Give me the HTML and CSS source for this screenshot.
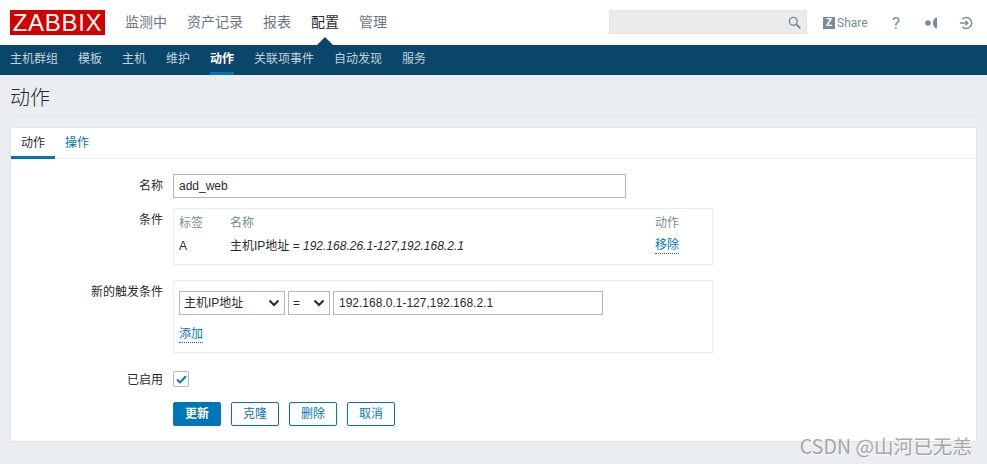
FILE: index.html
```html
<!DOCTYPE html>
<html lang="zh">
<head>
<meta charset="utf-8">
<title>动作</title>
<link rel="stylesheet" href="styles.css">
</head>
<body>
<header class="top">
  <div class="logo">ZABBIX</div>
  <nav class="main-nav">
    <a>监测中</a><a>资产记录</a><a>报表</a><a class="active">配置</a><a>管理</a>
  </nav>
  <div class="tools">
    <div class="search">
      <svg width="13" height="13" viewBox="0 0 16 16" fill="none" stroke="#768d99" stroke-width="1.8"><circle cx="6.5" cy="6.5" r="4.8"/><path d="M10 10L15 15" stroke-width="2.4"/></svg>
    </div>
    <div class="share"><span class="zbadge">Z</span><span>Share</span></div>
    <span class="help">?</span>
    <svg class="ico-support" width="14" height="14" viewBox="0 0 14 14" fill="#768d99"><circle cx="4" cy="7" r="2.8"/><path d="M13 1.5h-1C10 2.5 9 4.5 9 7s1 4.5 3 5.5h1z"/></svg>
    <svg class="ico-exit" width="14" height="14" viewBox="0 0 16 16" fill="none" stroke="#768d99" stroke-width="1.7"><path d="M4 3.6A6.2 6.2 0 1 1 4 12.4"/><path d="M1 8h9"/><path d="M7.5 5.6L10 8l-2.5 2.4"/></svg>
  </div>
</header>
<nav class="sub-nav">
  <a>主机群组</a><a>模板</a><a>主机</a><a>维护</a><a class="active">动作</a><a>关联项事件</a><a>自动发现</a><a>服务</a>
</nav>
<main class="page">
  <h1 class="title">动作</h1>
  <section class="card">
    <div class="tabs"><a class="tab active">动作</a><a class="tab">操作</a></div>
    <form class="form">
      <div class="row row-name">
        <label class="lbl">名称</label>
        <input class="txt txt-name" type="text" value="add_web">
      </div>
      <div class="row row-cond">
        <label class="lbl">条件</label>
        <div class="box box-cond">
          <div class="cond-grid">
            <span class="th">标签</span><span class="th">名称</span><span class="th">动作</span>
            <span>A</span><span>主机IP地址 = <i>192.168.26.1-127,192.168.2.1</i></span><a class="link">移除</a>
          </div>
        </div>
      </div>
      <div class="row row-new">
        <label class="lbl">新的触发条件</label>
        <div class="box box-new">
          <div class="controls">
            <div class="sel sel-type">主机IP地址<svg width="12" height="8" viewBox="0 0 12 8" fill="none" stroke="#1f2c33" stroke-width="2"><path d="M1.5 1.5L6 6l4.5-4.5"/></svg></div>
            <div class="sel sel-op">=<svg width="12" height="8" viewBox="0 0 12 8" fill="none" stroke="#1f2c33" stroke-width="2"><path d="M1.5 1.5L6 6l4.5-4.5"/></svg></div>
            <input class="txt txt-val" type="text" value="192.168.0.1-127,192.168.2.1">
          </div>
          <a class="link link-add">添加</a>
        </div>
      </div>
      <div class="row row-check">
        <label class="lbl">已启用</label>
        <span class="check"><svg width="11" height="9" viewBox="0 0 11 9" fill="none" stroke="#0275b8" stroke-width="2"><path d="M1 4.5L4 7.4 10 1.2"/></svg></span>
      </div>
      <div class="row row-btns">
        <span class="lbl"></span>
        <div class="btns">
          <span class="btn primary">更新</span><span class="btn">克隆</span><span class="btn">删除</span><span class="btn">取消</span>
        </div>
      </div>
    </form>
  </section>
</main>
<div class="watermark">CSDN @山河已无恙</div>
</body>
</html>
```
FILE: styles.css
```css
* { box-sizing: border-box; }
html, body { margin: 0; height: 100%; }
body {
  background: #ebeef0;
  color: #1f2c33;
  font: 12px/16px "Liberation Sans", "Noto Sans CJK SC", sans-serif;
  overflow: hidden;
  position: relative;
}
.top {
  height: 45px;
  background: #fff;
  display: flex;
  align-items: center;
  padding-left: 10px;
}
.logo {
  width: 95px;
  height: 25px;
  background: #d40000;
  color: #fff;
  font: 24px/26px "Liberation Sans", sans-serif;
  text-align: center;
  letter-spacing: 0.7px;
}
.main-nav { display: flex; gap: 20px; margin-left: 20px; font-size: 14px; color: #687780; }
.main-nav a { position: relative; line-height: 45px; }
.main-nav a.active { color: #1f2c33; }
.main-nav a.active::after {
  content: "";
  position: absolute;
  left: 50%;
  bottom: 0;
  margin-left: -8px;
  border: 8px solid transparent;
  border-top: 0;
  border-bottom-color: #0a466a;
}
.tools { margin-left: auto; display: flex; align-items: center; color: #768d99; }
.search {
  width: 198px;
  height: 24px;
  background: #ebebeb;
  border: 1px solid #e3e3e3;
  margin-right: 16px;
  margin-top: -1px;
  display: flex;
  align-items: center;
  justify-content: flex-end;
  padding-right: 5px;
}
.share { display: flex; align-items: center; gap: 2px; width: 46px; font-family: Roboto, sans-serif; }
.zbadge {
  width: 12px;
  height: 12px;
  background: #768d99;
  color: #fff;
  font: 700 10px/12px "Liberation Sans", sans-serif;
  text-align: center;
}
.help { font: 17px/16px Roboto, sans-serif; margin-left: 23px; width: 8px; }
.ico-support { margin-left: 24px; }
.ico-exit { margin-left: 21px; margin-right: 14px; }
.sub-nav {
  height: 30px;
  background: #0a466a;
  display: flex;
  gap: 20px;
  padding-left: 10px;
  color: #c3d2da;
}
.sub-nav a { line-height: 29px; height: 30px; }
.sub-nav a.active { color: #fff; font-weight: 700; border-bottom: 3px solid #0275b8; }
.page { padding: 0 10px; }
.title {
  margin: 0;
  height: 42px;
  border-bottom: 1px solid #dfe4e7;
  font-size: 20px;
  font-weight: 300;
  line-height: 46px;
  color: #1f2c33;
}
.card {
  margin-top: 10px;
  height: 315px;
  width: 967px;
  background: #fff;
  border: 1px solid #dfe4e7;
  border-top-color: #e4e8ea;
}
.tabs { height: 31px; border-bottom: 1px solid #ebeef0; display: flex; }
.tab { width: 44px; text-align: center; line-height: 30px; color: #0275b8; }
.tab.active { color: #1f2c33; border-bottom: 3px solid #0275b8; height: 31px; }
.form { padding-top: 15px; }
.row { display: flex; align-items: flex-start; }
.lbl { width: 152px; text-align: right; margin-right: 10px; flex: none; color: #1f2c33; line-height: 24px; }
.txt {
  height: 24px;
  border: 1px solid #acbbc2;
  background: #fff;
  color: #1f2c33;
  font: 12px "Liberation Sans", "Noto Sans CJK SC", sans-serif;
  padding: 0 5px;
  outline: none;
  border-radius: 0;
}
.txt-name { width: 453px; }
.box { border: 1px solid #ebeef0; width: 540px; }
.row-cond { margin-top: 10px; }
.box-cond { height: 57px; padding: 5px 5px; }
.cond-grid {
  display: grid;
  grid-template-columns: 51px 425px 50px;
  grid-template-rows: 17px 23px;
  align-items: center;
  row-gap: 3px;
}
.th { color: #768d99; }
.link { color: #0275b8; border-bottom: 1px dotted #0275b8; justify-self: start; line-height: 15px; }
.row-new { margin-top: 15px; }
.box-new { height: 73px; padding: 10px 5px 0; display: flex; flex-direction: column; align-items: flex-start; }
.controls { display: flex; gap: 3px; }
.sel {
  height: 24px;
  border: 1px solid #acbbc2;
  display: flex;
  align-items: center;
  justify-content: space-between;
  padding: 0 4px;
  background: #fff;
}
.sel-type { width: 106px; }
.sel-op { width: 42px; padding-left: 4px; }
.txt-val { width: 270px; }
.link-add { margin-top: 12px; }
.row-check { margin-top: 14px; align-items: center; height: 24px; }
.row-check .lbl { margin-top: 2px; }
.check {
  width: 16px;
  height: 16px;
  border: 1px solid #acbbc2;
  border-radius: 2px;
  display: flex;
  align-items: center;
  justify-content: center;
}
.row-btns { margin-top: 11px; }
.btns { display: flex; gap: 10px; }
.btn {
  width: 48px;
  height: 24px;
  border: 1px solid #0275b8;
  border-radius: 2px;
  color: #0275b8;
  text-align: center;
  line-height: 22px;
}
.btn.primary { background: #0275b8; color: #fff; font-weight: 700; }
.watermark {
  position: absolute;
  right: 15px;
  bottom: 8px;
  font: 19.6px/20px "Noto Sans CJK SC", sans-serif;
  color: rgba(120,120,120,.65);
  text-shadow: 1px 1px 1px rgba(255,255,255,.6);
}
```
